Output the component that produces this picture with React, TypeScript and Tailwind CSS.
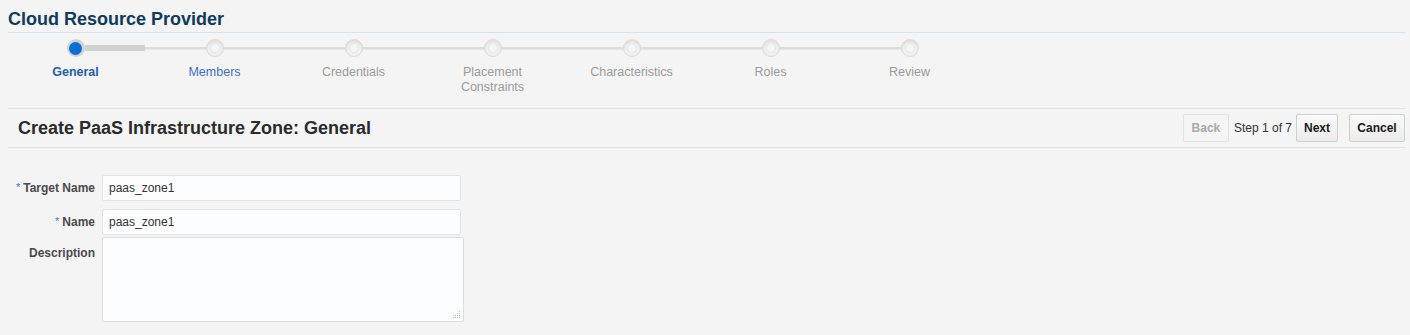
import { FC } from "react";

const steps = [
  { label: "General", state: "active" },
  { label: "Members", state: "next" },
  { label: "Credentials", state: "off" },
  { label: "Placement Constraints", state: "off" },
  { label: "Characteristics", state: "off" },
  { label: "Roles", state: "off" },
  { label: "Review", state: "off" },
];

const TrainStep: FC<{ label: string; state: string; index: number }> = ({ label, state, index }) => {
  const first = index === 0;
  const last = index === steps.length - 1;
  return (
    <div className="flex flex-col items-center">
      {/* track + stop */}
      <div className="flex items-center w-full h-[18px]">
        <div className={`flex-1 h-[2px] ${first ? "" : "bg-[#dcdcdc] shadow-[0_1px_1px_rgba(0,0,0,0.06)]"}`} />
        {state === "active" ? (
          <div className="w-[18px] h-[18px] rounded-full bg-[#d3d3d3] flex items-center justify-center">
            <div className="w-[13px] h-[13px] rounded-full bg-[#0b6fd3]" />
          </div>
        ) : (
          <div className="w-[18px] h-[18px] rounded-full bg-[#eef0f2] border border-[#d9d9d9] shadow-[inset_0_2px_2px_rgba(0,0,0,0.08)] flex items-center justify-center">
            <div className="w-[10px] h-[10px] rounded-full bg-[#f3f5f7] border border-[#e4e6e8]" />
          </div>
        )}
        <div
          className={`flex-1 ${
            last ? "" : first ? "h-[6px] bg-[#d2d2d2]" : "h-[2px] bg-[#dcdcdc] shadow-[0_1px_1px_rgba(0,0,0,0.06)]"
          }`}
        />
      </div>
      <div
        className={`mt-[8px] text-[12.5px] leading-[15px] text-center w-[100px] ${
          state === "active"
            ? "text-[#2461a8] font-bold"
            : state === "next"
            ? "text-[#3f6fc4]"
            : "text-[#9c9c9c]"
        }`}
      >
        {label}
      </div>
    </div>
  );
};

const Field: FC<{ label: string; required?: boolean; value: string }> = ({ label, required, value }) => (
  <div className="flex items-center">
    <div className="w-[95px] text-right text-[12px] font-bold text-[#4a4a4a] pr-0">
      {required && <span className="text-[#2a7bd6] font-normal text-[11px] align-top mr-[3px]">*</span>}
      {label}
    </div>
    <div className="ml-[7px] w-[359px] h-[26px] bg-[#fcfdfe] border border-[#e2e2e2] rounded-[2px] flex items-center px-[6px] text-[12px] text-[#333]">
      {value}
    </div>
  </div>
);

const App: FC = () => {
  return (
    <div
      className="w-[1410px] h-[335px] bg-[#f4f4f4] overflow-hidden text-[#333]"
      style={{ fontFamily: '"Liberation Sans", Arial, sans-serif' }}
    >
      {/* page title */}
      <div className="px-[8px] pt-[8px] h-[32px]">
        <h1 className="text-[18px] leading-[22px] font-bold text-[#0f3b5c]">Cloud Resource Provider</h1>
      </div>
      <div className="mx-[8px] mr-[5px] h-px bg-[#d5e2ee]" />

      {/* train */}
      <div className="h-[75px] pt-[6px] pl-[6px] grid grid-cols-[repeat(7,139px)]">
        {steps.map((s, i) => (
          <TrainStep key={s.label} label={s.label} state={s.state} index={i} />
        ))}
      </div>
      <div className="mx-[8px] mr-[5px] h-px bg-[#d5e2ee]" />

      {/* header */}
      <div className="h-[38px] flex items-center pl-[18px] pr-[5px]">
        <h2 className="text-[18px] font-bold text-[#2b2b2b] flex-1">Create PaaS Infrastructure Zone: General</h2>
        <div className="flex items-center text-[12px]">
          <button className="h-[28px] w-[46px] border border-[#e3e3e3] rounded-[2px] bg-[#f5f5f5] text-[#aaa] font-bold">
            Back
          </button>
          <span className="ml-[5px] mr-[4px] text-[#333]">Step 1 of 7</span>
          <button className="h-[28px] w-[42px] border border-[#cfcfcf] rounded-[2px] bg-gradient-to-b from-[#fafafa] to-[#ebebeb] text-[#1a1a1a] font-bold">
            Next
          </button>
          <button className="ml-[11px] h-[28px] w-[56px] border border-[#cfcfcf] rounded-[2px] bg-gradient-to-b from-[#fafafa] to-[#ebebeb] text-[#1a1a1a] font-bold">
            Cancel
          </button>
        </div>
      </div>
      <div className="mx-[8px] mr-[5px] h-px bg-[#d5e2ee]" />

      {/* form */}
      <div className="pt-[27px] flex flex-col gap-[8px]">
        <Field label="Target Name" required value="paas_zone1" />
        <Field label="Name" required value="paas_zone1" />
      </div>
      <div className="flex mt-[2px]">
        <div className="w-[95px] text-right text-[12px] font-bold text-[#4a4a4a] pt-[7px]">Description</div>
        <div className="ml-[7px] w-[362px] h-[85px] bg-[#fcfdfe] border border-[#dcdcdc] rounded-[2px] relative">
          <svg className="absolute right-[2px] bottom-[2px]" width="8" height="8" viewBox="0 0 8 8">
            <g fill="#b5b5b5">
              <rect x="6" y="0" width="1" height="1" />
              <rect x="4" y="2" width="1" height="1" />
              <rect x="6" y="2" width="1" height="1" />
              <rect x="2" y="4" width="1" height="1" />
              <rect x="4" y="4" width="1" height="1" />
              <rect x="6" y="4" width="1" height="1" />
              <rect x="0" y="6" width="1" height="1" />
              <rect x="2" y="6" width="1" height="1" />
              <rect x="4" y="6" width="1" height="1" />
              <rect x="6" y="6" width="1" height="1" />
            </g>
          </svg>
        </div>
      </div>
    </div>
  );
};

export default App;
